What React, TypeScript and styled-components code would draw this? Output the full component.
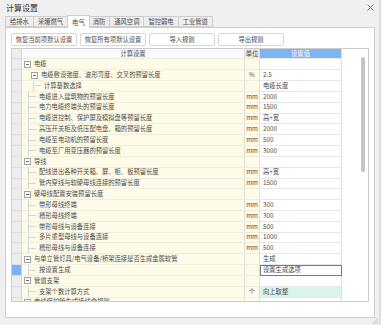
import { createGlobalStyle } from 'styled-components';
import styled from 'styled-components';

type Row = {
  level: number;
  group?: boolean;
  label: string;
  unit?: string;
  value?: string;
  editing?: boolean;
  selected?: boolean;
  tint?: boolean;
};

const rows: Row[] = [
  { level: 0, group: true, label: '电缆' },
  { level: 1, group: true, label: '电缆敷设弛度、波形弯度、交叉的预留长度', unit: '%', value: '2.5' },
  { level: 2, label: '计算基数选择', value: '电缆长度' },
  { level: 1, label: '电缆进入建筑物的预留长度', unit: 'mm', value: '2000' },
  { level: 1, label: '电力电缆终端头的预留长度', unit: 'mm', value: '1500' },
  { level: 1, label: '电缆进控制、保护屏及模拟盘等预留长度', unit: 'mm', value: '高+宽' },
  { level: 1, label: '高压开关柜及低压配电盘、箱的预留长度', unit: 'mm', value: '2000' },
  { level: 1, label: '电缆至电动机的预留长度', unit: 'mm', value: '500' },
  { level: 1, label: '电缆至厂用变压器的预留长度', unit: 'mm', value: '3000' },
  { level: 0, group: true, label: '导线' },
  { level: 1, label: '配线进出各种开关箱、屏、柜、板预留长度', unit: 'mm', value: '高+宽' },
  { level: 1, label: '管内穿线与软硬母线连接的预留长度', unit: 'mm', value: '1500' },
  { level: 0, group: true, label: '硬母线配置安装预留长度' },
  { level: 1, label: '带形母线终端', unit: 'mm', value: '300' },
  { level: 1, label: '槽形母线终端', unit: 'mm', value: '300' },
  { level: 1, label: '带形母线与设备连接', unit: 'mm', value: '500' },
  { level: 1, label: '多片重型母线与设备连接', unit: 'mm', value: '1000' },
  { level: 1, label: '槽形母线与设备连接', unit: 'mm', value: '500' },
  { level: 0, group: true, label: '与单立管灯具/电气设备/桥架连接是否生成金属软管', value: '生成' },
  { level: 1, label: '按设置生成', value: '设置生成选项', editing: true, selected: true },
  { level: 0, group: true, label: '管道支架' },
  { level: 1, label: '支架个数计算方式', unit: '个', value: '向上取整', tint: true },
  { level: 0, group: true, label: '电线保护管生成接线盒规则' },
];

const tabs = ['给排水', '采暖燃气', '电气', '消防', '通风空调', '智控弱电', '工业管道'];
const actions = ['恢复当前项默认设置', '恢复所有项默认设置', '导入规则', '导出规则'];

const GlobalStyle = createGlobalStyle`
  body {
    margin: 0;
    font-family: "Noto Sans CJK SC", "Noto Sans", sans-serif;
    color: #444;
  }
`;

const Window = styled.div`
  width: 381px;
  height: 325px;
  box-sizing: border-box;
  background: #f0f0f0;
  border-right: 2px solid #dcdcdc;
  display: flex;
  flex-direction: column;
  overflow: hidden;
`;

const TitleBar = styled.div`
  height: 15px;
  padding: 0 5px 0 6px;
  display: flex;
  align-items: center;
  justify-content: space-between;
  font-size: 8px;
  color: #333;
`;

const TabStrip = styled.div`
  height: 12px;
  padding-left: 5px;
  display: flex;
  align-items: flex-end;
`;

const Tab = styled.div<{ $active?: boolean }>`
  position: relative;
  z-index: ${p => (p.$active ? 1 : 0)};
  height: ${p => (p.$active ? '13px' : '11px')};
  margin-bottom: ${p => (p.$active ? '-1px' : '0')};
  margin-left: ${p => (p.$active ? '-1px' : '0')};
  margin-right: ${p => (p.$active ? '-1px' : '0')};
  padding: 0 4px;
  box-sizing: border-box;
  display: flex;
  align-items: center;
  font-size: 6.3px;
  color: #4a4a4a;
  background: ${p => (p.$active ? '#fff' : '#eeeeee')};
  border: 1px solid #cdcdcd;
  border-bottom: ${p => (p.$active ? 'none' : '1px solid #cdcdcd')};
  border-left: ${p => (p.$active ? '1px solid #cdcdcd' : 'none')};
  &:first-child {
    border-left: 1px solid #cdcdcd;
  }
`;

const Panel = styled.div`
  height: 291px;
  margin: 0 4px 0 5px;
  box-sizing: border-box;
  background: #fff;
  border: 1px solid #cdcdcd;
  padding: 5px 5px 0 5px;
  display: flex;
  flex-direction: column;
  gap: 2px;
`;

const Toolbar = styled.div`
  display: flex;
  gap: 3px;
`;

const ActionButton = styled.button`
  width: 66px;
  height: 13px;
  padding: 0;
  box-sizing: border-box;
  font-family: inherit;
  font-size: 6.3px;
  color: #4a4a4a;
  background: #fff;
  border: 1px solid #d6d6d6;
  border-radius: 2px;
`;

const Table = styled.div`
  height: 254px;
  box-sizing: border-box;
  border: 1px solid #cccccc;
  display: flex;
  overflow: hidden;
`;

const Grid = styled.div`
  width: 330px;
  display: flex;
  flex-direction: column;
`;

const RowLine = styled.div<{ $head?: boolean }>`
  flex: 0 0 ${p => (p.$head ? '10.4px' : '10.83px')};
  display: grid;
  grid-template-columns: 10px 223px 15px 82px;
  font-size: 6.3px;
  line-height: 1;
`;

const Cell = styled.div<{ $bg?: string; $align?: string; $color?: string }>`
  box-sizing: border-box;
  display: flex;
  align-items: center;
  justify-content: ${p => p.$align || 'flex-start'};
  background: ${p => p.$bg || '#fefce9'};
  color: ${p => p.$color || '#4a4a4a'};
  border-right: 1px solid #dfdfd4;
  border-bottom: 1px solid #eeeedf;
  white-space: nowrap;
  overflow: hidden;
`;

const RowHead = styled(Cell)<{ $selected?: boolean }>`
  background: ${p => (p.$selected ? '#79b2f2' : '#ededed')};
  border-bottom: 1px solid #dddddd;
  border-right: 1px solid #d4d4d4;
`;

const TreeCell = styled(Cell)`
  padding-left: 2px;
`;

const ValueCell = styled(Cell)<{ $editing?: boolean; $tint?: boolean }>`
  padding-left: ${p => (p.$editing ? '2px' : '3px')};
  background: ${p => (p.$tint ? '#dcf5ea' : '#fff')};
  border-bottom: 1px solid #e6e6e6;
  ${p => (p.$editing ? 'border: 1px solid #7a7a7a;' : '')}
`;

const Indent = styled.span<{ $w: number }>`
  flex: 0 0 ${p => p.$w}px;
`;

const Toggle = styled.span`
  flex: 0 0 7px;
  height: 7px;
  box-sizing: border-box;
  margin-right: 3px;
  border: 1px solid #a3a3a3;
  background: #fff;
  display: flex;
  align-items: center;
  justify-content: center;
  &::after {
    content: '';
    width: 3px;
    height: 1px;
    background: #666;
  }
`;

const Connector = styled.span`
  flex: 0 0 8px;
  align-self: stretch;
  margin-right: 3px;
  box-sizing: border-box;
  border-left: 1px solid #d4d4d4;
  display: flex;
  align-items: center;
  &::after {
    content: '';
    width: 100%;
    height: 1px;
    background: #d4d4d4;
  }
`;

const Blank = styled.div`
  flex: 1;
  background: #fff;
`;

const ScrollTrack = styled.div`
  width: 7px;
  padding-top: 8px;
  background: #fff;
`;

const Thumb = styled.div`
  width: 4px;
  height: 115px;
  border-radius: 2px;
  background: #c4c4c4;
`;

const Footer = styled.div`
  flex: 1;
  display: flex;
  justify-content: flex-end;
  align-items: flex-end;
  padding: 0 1px 1px 0;
`;

const CloseIcon = () => (
  <svg width="7" height="7" viewBox="0 0 7 7">
    <path d="M0.5 0.5 L6.5 6.5 M6.5 0.5 L0.5 6.5" stroke="#777" strokeWidth="0.9" />
  </svg>
);

const Grip = () => (
  <svg width="6" height="6" viewBox="0 0 6 6">
    {[
      [4.5, 0.5], [2.5, 2.5], [4.5, 2.5], [0.5, 4.5], [2.5, 4.5], [4.5, 4.5],
    ].map(([x, y]) => (
      <rect key={`${x}-${y}`} x={x} y={y} width="1" height="1" fill="#9a9a9a" />
    ))}
  </svg>
);

const TreeLabel = ({ row }: { row: Row }) => {
  if (row.group) {
    return (
      <>
        <Indent $w={row.level * 7} />
        <Toggle />
        {row.label}
      </>
    );
  }
  return (
    <>
      <Indent $w={4 + (row.level - 1) * 5} />
      <Connector />
      {row.label}
    </>
  );
};

const App = () => (
  <Window>
    <GlobalStyle />
    <TitleBar>
      <span>计算设置</span>
      <CloseIcon />
    </TitleBar>
    <TabStrip>
      {tabs.map(t => (
        <Tab key={t} $active={t === '电气'}>
          {t}
        </Tab>
      ))}
    </TabStrip>
    <Panel>
      <Toolbar>
        {actions.map(a => (
          <ActionButton key={a}>{a}</ActionButton>
        ))}
      </Toolbar>
      <Table>
        <Grid>
          <RowLine $head>
            <RowHead />
            <Cell $align="center" $bg="#fafafa">计算设置</Cell>
            <Cell $align="center" $bg="#ececec">单位</Cell>
            <Cell $align="center" $bg="#7db4f3" $color="#fff">设置值</Cell>
          </RowLine>
          {rows.map(r => (
            <RowLine key={r.label}>
              <RowHead $selected={r.selected} />
              <TreeCell>
                <TreeLabel row={r} />
              </TreeCell>
              <Cell $align="center">{r.unit}</Cell>
              <ValueCell $editing={r.editing} $tint={r.tint}>
                {r.value}
              </ValueCell>
            </RowLine>
          ))}
        </Grid>
        <Blank />
        <ScrollTrack>
          <Thumb />
        </ScrollTrack>
      </Table>
    </Panel>
    <Footer>
      <Grip />
    </Footer>
  </Window>
);

export default App;
